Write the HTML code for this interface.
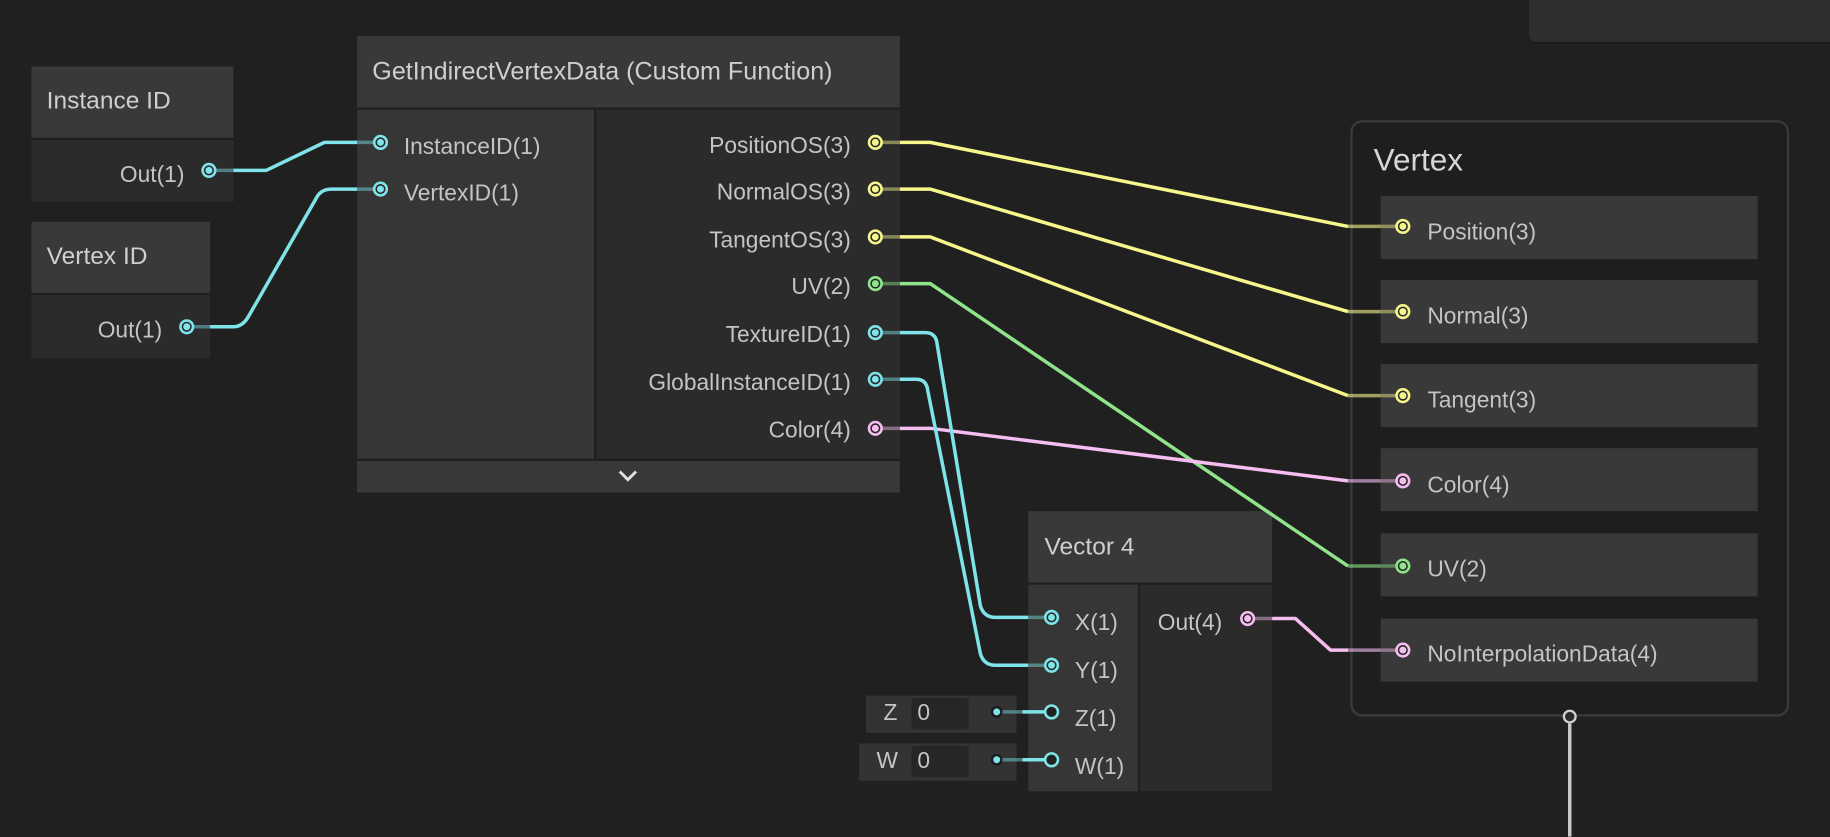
<!DOCTYPE html>
<html><head><meta charset="utf-8"><style>
html,body{margin:0;padding:0;width:1830px;height:837px;overflow:hidden;background:#202020;}
#w{position:absolute;left:0;top:0;width:1568px;height:717px;transform:scale(1.16709);transform-origin:0 0;font-family:"Liberation Sans",sans-serif;color:#c4c4c4;}
.b{position:absolute;}
.hd{background:#393939;}
.bd{background:#2b2b2b;}
.in{background:#363636;}
.t{position:absolute;font-size:19.5px;white-space:nowrap;line-height:22px;}
.ti{position:absolute;font-size:21px;white-space:nowrap;color:#cfcfcf;line-height:24px;}
.r{text-align:right;}
.slot{position:absolute;left:1183px;width:323px;height:54px;background:#393939;}
</style></head><body><div id="w">
<div class="b" style="left:1310px;top:-10px;width:270px;height:46px;background:#2e2e2e;border-radius:0 0 0 6px;box-shadow:0 1px 0 #161616;"></div>

<div class="b hd" style="left:27px;top:57px;width:173px;height:61px;"></div>
<div class="b bd" style="left:27px;top:120px;width:173px;height:53px;"></div>
<div class="ti" style="left:40px;top:75px;">Instance ID</div>
<div class="t r" style="left:40px;width:118px;top:139px;">Out(1)</div>

<div class="b hd" style="left:27px;top:190px;width:153px;height:61px;"></div>
<div class="b bd" style="left:27px;top:253px;width:153px;height:54px;"></div>
<div class="ti" style="left:40px;top:208px;">Vertex ID</div>
<div class="t r" style="left:20px;width:119px;top:272px;">Out(1)</div>

<div class="b hd" style="left:306px;top:31px;width:465px;height:61px;"></div>
<div class="b in" style="left:306px;top:94px;width:203px;height:299px;"></div>
<div class="b bd" style="left:511px;top:94px;width:260px;height:299px;"></div>
<div class="b hd" style="left:306px;top:395px;width:465px;height:27px;"></div>
<div class="ti" style="left:319px;top:49px;font-size:21.5px;">GetIndirectVertexData (Custom Function)</div>
<div class="t" style="left:346px;top:115px;">InstanceID(1)</div>
<div class="t" style="left:346px;top:155px;">VertexID(1)</div>
<div class="t r" style="left:500px;width:229px;top:114px;">PositionOS(3)</div>
<div class="t r" style="left:500px;width:229px;top:154px;">NormalOS(3)</div>
<div class="t r" style="left:500px;width:229px;top:195px;">TangentOS(3)</div>
<div class="t r" style="left:500px;width:229px;top:235px;">UV(2)</div>
<div class="t r" style="left:500px;width:229px;top:276px;">TextureID(1)</div>
<div class="t r" style="left:500px;width:229px;top:317px;">GlobalInstanceID(1)</div>
<div class="t r" style="left:500px;width:229px;top:358px;">Color(4)</div>

<div class="b" style="left:1157px;top:103px;width:372px;height:507px;border:2px solid #3a3a3a;border-radius:10px;background:#1e1e1e;"></div>
<div class="t" style="left:1177px;top:121px;font-size:27px;line-height:32px;color:#d6d6d6;">Vertex</div>
<div class="slot" style="top:168px;"></div>
<div class="slot" style="top:240px;"></div>
<div class="slot" style="top:312px;"></div>
<div class="slot" style="top:384px;"></div>
<div class="slot" style="top:457px;"></div>
<div class="slot" style="top:530px;"></div>
<div class="t" style="left:1223px;top:188px;">Position(3)</div>
<div class="t" style="left:1223px;top:260px;">Normal(3)</div>
<div class="t" style="left:1223px;top:332px;">Tangent(3)</div>
<div class="t" style="left:1223px;top:405px;">Color(4)</div>
<div class="t" style="left:1223px;top:477px;">UV(2)</div>
<div class="t" style="left:1223px;top:550px;">NoInterpolationData(4)</div>

<div class="b hd" style="left:881px;top:438px;width:209px;height:61px;"></div>
<div class="b in" style="left:881px;top:501px;width:94px;height:177px;"></div>
<div class="b bd" style="left:977px;top:501px;width:113px;height:177px;"></div>
<div class="ti" style="left:895px;top:457px;">Vector 4</div>
<div class="t" style="left:921px;top:523px;">X(1)</div>
<div class="t" style="left:921px;top:564px;">Y(1)</div>
<div class="t" style="left:921px;top:605px;">Z(1)</div>
<div class="t" style="left:921px;top:646px;">W(1)</div>
<div class="t" style="left:992px;top:523px;">Out(4)</div>

<div class="b" style="left:742px;top:596px;width:129px;height:32px;background:#333;"></div>
<div class="b" style="left:781px;top:598px;width:49px;height:27px;background:#262626;border-radius:3px;"></div>
<div class="t" style="left:757px;top:600px;">Z</div>
<div class="t" style="left:786px;top:600px;">0</div>
<div class="b" style="left:736px;top:637px;width:135px;height:32px;background:#333;"></div>
<div class="b" style="left:781px;top:639px;width:49px;height:27px;background:#262626;border-radius:3px;"></div>
<div class="t" style="left:751px;top:641px;">W</div>
<div class="t" style="left:786px;top:641px;">0</div>

<svg class="b" style="left:0;top:0" width="1568" height="717" viewBox="0 0 1568 717">
<defs>
<g id="pc"><circle r="6.5" fill="#7fe3ea"/><circle r="4.3" fill="#262626"/><circle r="3" fill="#7fe3ea"/></g>
<g id="py"><circle r="6.5" fill="#f6f68c"/><circle r="4.3" fill="#262626"/><circle r="3" fill="#f6f68c"/></g>
<g id="pg"><circle r="6.5" fill="#8fe48a"/><circle r="4.3" fill="#262626"/><circle r="3" fill="#8fe48a"/></g>
<g id="pp"><circle r="6.5" fill="#f5bdf0"/><circle r="4.3" fill="#262626"/><circle r="3" fill="#f5bdf0"/></g>
</defs>
<g fill="none" stroke-width="3" stroke-linejoin="round">
<g opacity="0.45">
<line x1="179" y1="146" x2="200" y2="146" stroke="#7fe3ea"/>
<line x1="160" y1="280" x2="180" y2="280" stroke="#7fe3ea"/>
<line x1="306" y1="122" x2="326" y2="122" stroke="#7fe3ea"/>
<line x1="306" y1="162" x2="326" y2="162" stroke="#7fe3ea"/>
<line x1="750" y1="122" x2="771" y2="122" stroke="#f6f68c"/>
<line x1="750" y1="162" x2="771" y2="162" stroke="#f6f68c"/>
<line x1="750" y1="203" x2="771" y2="203" stroke="#f6f68c"/>
<line x1="750" y1="243" x2="771" y2="243" stroke="#8fe48a"/>
<line x1="750" y1="285" x2="771" y2="285" stroke="#7fe3ea"/>
<line x1="750" y1="325" x2="771" y2="325" stroke="#7fe3ea"/>
<line x1="750" y1="367" x2="771" y2="367" stroke="#f5bdf0"/>
<line x1="881" y1="529" x2="901" y2="529" stroke="#7fe3ea"/>
<line x1="881" y1="570" x2="901" y2="570" stroke="#7fe3ea"/>
<line x1="854" y1="610" x2="876" y2="610" stroke="#7fe3ea"/>
<line x1="854" y1="651" x2="876" y2="651" stroke="#7fe3ea"/>
<line x1="1069" y1="530" x2="1090" y2="530" stroke="#f5bdf0"/>
<line x1="1183" y1="194" x2="1202" y2="194" stroke="#f6f68c"/>
<line x1="1183" y1="267" x2="1202" y2="267" stroke="#f6f68c"/>
<line x1="1183" y1="339" x2="1202" y2="339" stroke="#f6f68c"/>
<line x1="1183" y1="412" x2="1202" y2="412" stroke="#f5bdf0"/>
<line x1="1183" y1="485" x2="1202" y2="485" stroke="#8fe48a"/>
<line x1="1183" y1="557" x2="1202" y2="557" stroke="#f5bdf0"/>
</g>
<g opacity="0.6">
<line x1="1155" y1="194" x2="1183" y2="194" stroke="#f6f68c"/>
<line x1="1155" y1="267" x2="1183" y2="267" stroke="#f6f68c"/>
<line x1="1155" y1="339" x2="1183" y2="339" stroke="#f6f68c"/>
<line x1="1155" y1="412" x2="1183" y2="412" stroke="#f5bdf0"/>
<line x1="1155" y1="485" x2="1183" y2="485" stroke="#8fe48a"/>
<line x1="1155" y1="557" x2="1183" y2="557" stroke="#f5bdf0"/>
</g>
<path d="M200 146 H228 L278 122 H306" stroke="#7fe3ea"/>
<path d="M180 280 H200 Q208 280 213 271 L272 168 Q276 162 284 162 H306" stroke="#7fe3ea"/>
<path d="M771 122 H797 L1155 194" stroke="#f6f68c"/>
<path d="M771 162 H797 L1155 267" stroke="#f6f68c"/>
<path d="M771 203 H797 L1155 339" stroke="#f6f68c"/>
<path d="M771 243 H797 L1155 485" stroke="#8fe48a"/>
<path d="M771 367 H797 L1155 412" stroke="#f5bdf0"/>
<path d="M771 285 H793 Q802 285 803 295 L840 519 Q843 529 853 529 H881" stroke="#7fe3ea"/>
<path d="M771 325 H785 Q794 325 795 335 L840 560 Q843 570 853 570 H881" stroke="#7fe3ea"/>
<path d="M876 610 H895 M876 651 H895" stroke="#7fe3ea"/>
<path d="M1090 530 H1110 L1140 557 H1155" stroke="#f5bdf0"/>
<path d="M1345 620 V717" stroke="#c8c8c8"/>
</g>
<use href="#pc" x="179" y="146"/><use href="#pc" x="160" y="280"/><use href="#pc" x="326" y="122"/><use href="#pc" x="326" y="162"/>
<use href="#pc" x="750" y="285"/><use href="#pc" x="750" y="325"/><use href="#pc" x="901" y="529"/><use href="#pc" x="901" y="570"/>
<use href="#py" x="750" y="122"/><use href="#py" x="750" y="162"/><use href="#py" x="750" y="203"/>
<use href="#py" x="1202" y="194"/><use href="#py" x="1202" y="267"/><use href="#py" x="1202" y="339"/>
<use href="#pg" x="750" y="243"/><use href="#pg" x="1202" y="485"/>
<use href="#pp" x="750" y="367"/><use href="#pp" x="1069" y="530"/><use href="#pp" x="1202" y="412"/><use href="#pp" x="1202" y="557"/>
<g fill="#222" stroke="#7fe3ea" stroke-width="2.2"><circle cx="901" cy="610" r="5.5"/><circle cx="901" cy="651" r="5.5"/></g>
<g fill="#7fe3ea" stroke="#1a1a1a" stroke-width="2"><circle cx="854" cy="610" r="4"/><circle cx="854" cy="651" r="4"/></g>
<circle cx="1345" cy="614" r="5" fill="#2a2a2a" stroke="#d0d0d0" stroke-width="2"/>
<path d="M531 404 L538 411 L545 404" fill="none" stroke="#e0e0e0" stroke-width="2.5"/>
</svg>
</div></body></html>
